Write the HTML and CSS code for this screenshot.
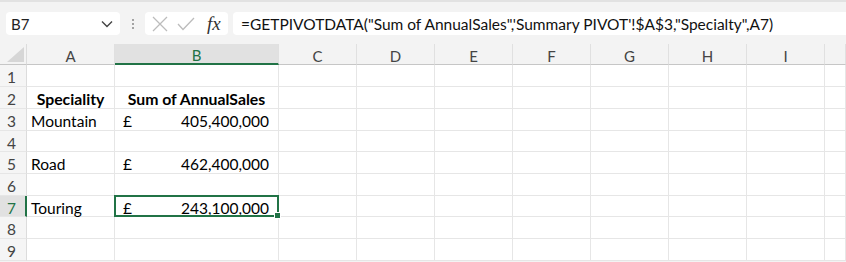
FILE: index.html
```html
<!DOCTYPE html>
<html lang="en">
<head>
  <meta charset="UTF-8" />
  <title>Summary Sheet</title>
  <link rel="stylesheet" href="styles.css">
</head>
<body>
  <div class="toolbar">
    <div class="name-box">
      <span>B7</span>
      <svg class="chevron" width="12" height="8" viewBox="0 0 12 8"><polyline points="1,1.5 6,6.5 11,1.5" fill="none" stroke="#444" stroke-width="1.4"/></svg>
    </div>
    <div class="grip"><i></i><i></i><i></i></div>
    <div class="fx-box">
      <svg width="16" height="16" viewBox="0 0 16 16"><path d="M1 1 L15 15 M15 1 L1 15" stroke="#bcbcbc" stroke-width="1.3" fill="none"/></svg>
      <svg width="18" height="14" viewBox="0 0 18 14"><polyline points="1,7 6,12.5 17,1" stroke="#bcbcbc" stroke-width="1.3" fill="none"/></svg>
      <span class="fx">fx</span>
    </div>
    <div class="formula">=GETPIVOTDATA("Sum of AnnualSales",'Summary PIVOT'!$A$3,"Specialty",A7)</div>
  </div>

  <div class="sheet">
    <div class="corner"><span class="tri"></span></div>
    <div class="col-head">A</div>
    <div class="col-head active">B</div>
    <div class="col-head">C</div>
    <div class="col-head">D</div>
    <div class="col-head">E</div>
    <div class="col-head">F</div>
    <div class="col-head">G</div>
    <div class="col-head">H</div>
    <div class="col-head">I</div>
    <div class="col-head"></div>
  </div>
  <div class="sheet body" id="rows"></div>

  <script>
    const data = {
      2: ["Speciality", null, "Sum of AnnualSales"],
      3: ["Mountain", "405,400,000"],
      5: ["Road", "462,400,000"],
      7: ["Touring", "243,100,000"]
    };
    const rows = document.getElementById("rows");
    const extra = 8;

    for (let r = 1; r <= 9; r++) {
      const head = document.createElement("div");
      head.className = "row-head" + (r === 7 ? " active" : "");
      head.textContent = r;
      rows.appendChild(head);

      const a = document.createElement("div");
      const b = document.createElement("div");
      a.className = "cell";
      b.className = "cell";
      const d = data[r];
      if (d && d[2]) {
        a.classList.add("bold");
        b.classList.add("bold");
        a.textContent = d[0];
        b.textContent = d[2];
      } else if (d) {
        a.textContent = d[0];
        b.classList.add("money");
        b.innerHTML = `<span>£</span><span>${d[1]}</span>`;
      }
      if (r === 7) b.classList.add("selected");
      rows.appendChild(a);
      rows.appendChild(b);

      for (let c = 0; c < extra; c++) {
        const cell = document.createElement("div");
        cell.className = "cell";
        rows.appendChild(cell);
      }
    }
  </script>
</body>
</html>
```

FILE: styles.css
```css
body {
  margin: 0;
  background: #f3f3f3;
  font-family: Lato, 'Open Sans', sans-serif;
  color: #000;
  overflow: hidden;
}

.toolbar {
  height: 44px;
  box-sizing: border-box;
  border-top: 2px solid #e2e2e2;
  padding: 10px 0 0 6px;
  display: flex;
  align-items: flex-start;
}

.name-box {
  width: 114px;
  height: 23px;
  background: #fff;
  border-radius: 4px;
  display: flex;
  align-items: center;
  justify-content: space-between;
  padding: 1px 7px 0 5px;
  box-sizing: border-box;
  font-size: 15px;
  color: #222;
}

.grip {
  width: 25px;
  height: 23px;
  display: flex;
  flex-direction: column;
  align-items: center;
  justify-content: center;
  gap: 2px;
}

.grip i {
  width: 2px;
  height: 2px;
  background: #888;
  border-radius: 50%;
}

.fx-box {
  width: 83px;
  height: 23px;
  background: #fff;
  border-radius: 4px;
  display: flex;
  align-items: center;
  gap: 9px;
  padding-left: 7px;
  box-sizing: border-box;
}

.fx {
  font-family: 'Liberation Serif', serif;
  font-style: italic;
  font-size: 19px;
  color: #333;
  margin-left: 3px;
  line-height: 1;
}

.formula {
  flex: 1;
  margin-left: 5px;
  height: 23px;
  background: #fff;
  border-radius: 4px 0 0 4px;
  padding-left: 8px;
  font-size: 15.5px;
  line-height: 25px;
  white-space: nowrap;
  color: #111;
}

.sheet {
  display: grid;
  grid-template-columns: 27px 88px 164px 78px 78px 78px 78px 78px 78px 78px 1fr;
  grid-template-rows: 21px;
  background: #f3f3f3;
}

.sheet.body {
  background: #fff;
  grid-template-rows: 22px 22px 22px 21px 22px 22px 21px 22px 22px;
}

.corner {
  border-bottom: 1px solid #c6c6c6;
  border-right: 1px solid #dcdcdc;
  position: relative;
}

.tri {
  position: absolute;
  right: 2px;
  bottom: 2px;
  width: 0;
  height: 0;
  border-left: 17px solid transparent;
  border-bottom: 15px solid #d6d6d6;
}

.col-head {
  border-bottom: 1px solid #c6c6c6;
  border-right: 1px solid #e0e0e0;
  text-align: center;
  font-size: 15px;
  line-height: 24px;
  color: #444;
}

.col-head.active {
  background: #e1e1e1;
  color: #217346;
  border-bottom: 2px solid #217346;
  line-height: 23px;
}

.row-head {
  background: #f5f5f5;
  border-right: 1px solid #dcdcdc;
  border-bottom: 1px solid #e6e6e6;
  font-size: 15.5px;
  color: #444;
  padding-left: 7px;
  line-height: 24px;
}

.row-head.active {
  background: #e1e1e1;
  color: #217346;
  border-right: 2px solid #217346;
}

.cell {
  border-right: 1px solid #e6e6e6;
  border-bottom: 1px solid #e6e6e6;
  font-size: 15.5px;
  line-height: 24px;
  padding-left: 4px;
  white-space: nowrap;
}

.bold {
  font-weight: bold;
  font-size: 15.8px;
  text-align: center;
  padding-left: 0;
}

.money {
  display: flex;
  justify-content: space-between;
  padding: 0 9px 0 8px;
}

.selected {
  position: relative;
}

.selected::after {
  content: "";
  position: absolute;
  left: -1px;
  top: -1px;
  right: -1px;
  bottom: -1px;
  border: 2px solid #217346;
}

.selected::before {
  content: "";
  position: absolute;
  right: -3px;
  bottom: -3px;
  width: 5px;
  height: 5px;
  background: #217346;
  border: 1px solid #fff;
  z-index: 1;
}
```
